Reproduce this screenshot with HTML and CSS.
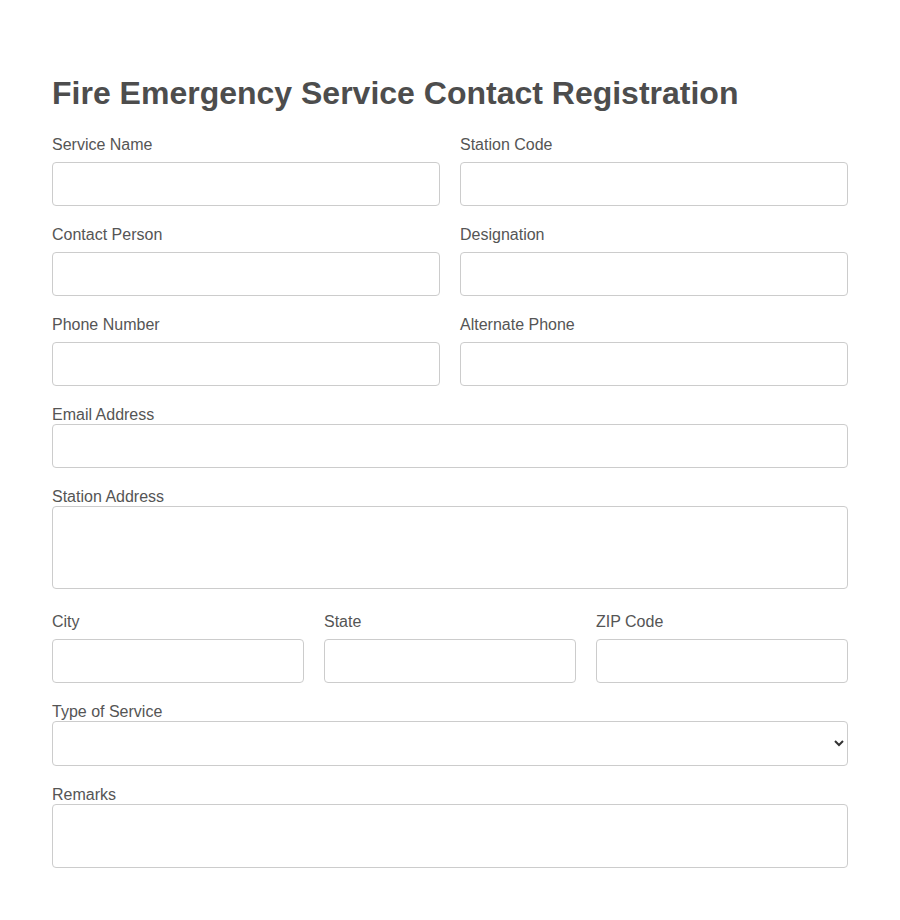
FILE: index.html
```html
<!DOCTYPE html>
<html lang="en">
<head>
<meta charset="utf-8">
<title>Fire Emergency Service Contact Registration</title>
<link rel="stylesheet" href="styles.css">
</head>
<body>
<div class="container">
  <h1 class="title">Fire Emergency Service Contact Registration</h1>
  <form class="form">
    <div class="row two">
      <div class="group">
        <label class="label block" for="service">Service Name</label>
        <input class="control" id="service" type="text">
      </div>
      <div class="group">
        <label class="label block" for="code">Station Code</label>
        <input class="control" id="code" type="text">
      </div>
    </div>
    <div class="row two">
      <div class="group">
        <label class="label block" for="person">Contact Person</label>
        <input class="control" id="person" type="text">
      </div>
      <div class="group">
        <label class="label block" for="designation">Designation</label>
        <input class="control" id="designation" type="text">
      </div>
    </div>
    <div class="row two">
      <div class="group">
        <label class="label block" for="phone">Phone Number</label>
        <input class="control" id="phone" type="tel">
      </div>
      <div class="group">
        <label class="label block" for="alt">Alternate Phone</label>
        <input class="control" id="alt" type="tel">
      </div>
    </div>
    <div class="row">
      <label class="label" for="email">Email Address</label>
      <input class="control" id="email" type="email">
    </div>
    <div class="row tall-gap">
      <label class="label" for="address">Station Address</label>
      <textarea class="control area-address" id="address"></textarea>
    </div>
    <div class="row three">
      <div class="group">
        <label class="label block" for="city">City</label>
        <input class="control" id="city" type="text">
      </div>
      <div class="group">
        <label class="label block" for="state">State</label>
        <input class="control" id="state" type="text">
      </div>
      <div class="group">
        <label class="label block" for="zip">ZIP Code</label>
        <input class="control" id="zip" type="text">
      </div>
    </div>
    <div class="row">
      <label class="label" for="type">Type of Service</label>
      <select class="control select" id="type">
        <option></option>
      </select>
    </div>
    <div class="row">
      <label class="label" for="remarks">Remarks</label>
      <textarea class="control area-remarks" id="remarks"></textarea>
    </div>
  </form>
</div>
</body>
</html>
```
FILE: styles.css
```css
html, body {
  margin: 0;
  padding: 0;
  background: #ffffff;
}

body {
  font-family: "Liberation Sans", Arial, sans-serif;
  color: #555555;
}

.container {
  padding: 75px 52px 40px;
}

.title {
  margin: 0 0 24px;
  font-size: 32px;
  font-weight: bold;
  line-height: 37px;
  color: #4d4d4d;
}

.form {
  display: flex;
  flex-direction: column;
}

.row {
  margin-bottom: 20px;
}

.row.tall-gap {
  margin-bottom: 24px;
}

.two {
  display: grid;
  grid-template-columns: 1fr 1fr;
  column-gap: 20px;
}

.three {
  display: grid;
  grid-template-columns: 1fr 1fr 1fr;
  column-gap: 20px;
}

.label {
  display: block;
  font-size: 16px;
  line-height: 18px;
  color: #555555;
}

.label.block {
  margin-bottom: 8px;
}

.control {
  display: block;
  box-sizing: border-box;
  width: 100%;
  height: 44px;
  margin: 0;
  padding: 10px;
  border: 1px solid #cccccc;
  border-radius: 4px;
  background: #ffffff;
  font-family: "Liberation Sans", Arial, sans-serif;
  font-size: 16px;
  color: #333333;
}

.select {
  height: 45px;
  padding: 10px 6px;
}

.area-address {
  height: 83px;
  resize: none;
}

.area-remarks {
  height: 64px;
  resize: none;
}
```
